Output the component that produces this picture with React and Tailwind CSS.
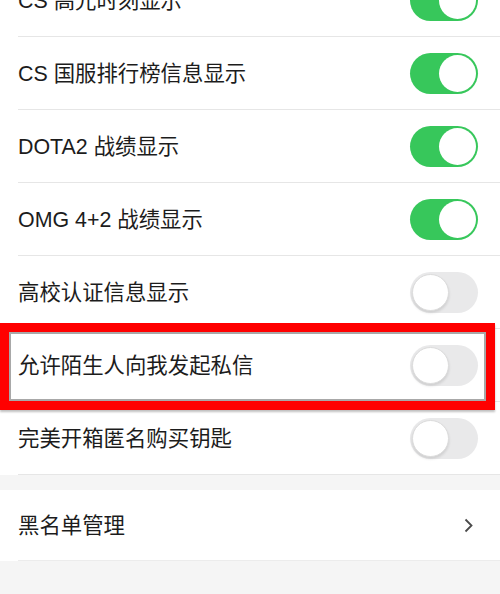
import { useState } from "react";

const rows = [
  { label: "CS 高光时刻显示", on: true },
  { label: "CS 国服排行榜信息显示", on: true },
  { label: "DOTA2 战绩显示", on: true },
  { label: "OMG 4+2 战绩显示", on: true },
  { label: "高校认证信息显示", on: false },
  { label: "允许陌生人向我发起私信", on: false, marked: true },
  { label: "完美开箱匿名购买钥匙", on: false },
];

function Toggle({ on, onClick }) {
  return (
    <button
      onClick={onClick}
      className={
        on
          ? "relative flex h-[41px] w-[68px] shrink-0 items-center justify-end rounded-full bg-[#37c75b] p-[2px]"
          : "relative flex h-[41px] w-[68px] shrink-0 items-center justify-start rounded-full bg-[#e9e9ea] p-[2px]"
      }
    >
      <span
        className={
          on
            ? "block h-[37px] w-[37px] rounded-full bg-white"
            : "block h-[37px] w-[37px] rounded-full border border-[#dcdcdc] bg-white shadow-[0_2px_3px_rgba(0,0,0,0.12)]"
        }
      />
    </button>
  );
}

export default function App() {
  const [settings, setSettings] = useState(rows);

  const flip = (i) => {
    const copy = [...settings];
    copy[i] = { ...copy[i], on: !copy[i].on };
    setSettings(copy);
  };

  return (
    <div
      className="h-[594px] w-[500px] overflow-hidden bg-[#f5f5f5] text-[#1c1c1c]"
      style={{ fontFamily: '"Liberation Sans", "Noto Sans CJK SC", sans-serif' }}
    >
      <div className="-mt-[36px] bg-white pl-[18px]">
        {settings.map((item, i) => (
          <div key={item.label} className="relative">
            <div className="flex h-[73px] items-center justify-between border-b border-[#e6e6e6] pr-[22px]">
              <span className="pt-[3px] text-[21.4px] leading-none">{item.label}</span>
              <Toggle on={item.on} onClick={() => flip(i)} />
            </div>
            {item.marked && (
              <div className="pointer-events-none absolute -left-[18px] right-[5px] top-[-6px] bottom-[-8px] border-[9px] border-[#ff0000] shadow-[0_2px_2px_rgba(0,0,0,0.25)]">
                <div className="h-full w-full border-2 border-[#a8a8a8]" />
              </div>
            )}
          </div>
        ))}
      </div>
      <div className="mt-[15px] bg-white pl-[18px]">
        <div className="flex h-[71px] items-center justify-between border-b border-[#ececec] pr-[27px]">
          <span className="pt-[3px] text-[21.4px] leading-none">黑名单管理</span>
          <svg width="9" height="15" viewBox="0 0 9 15" fill="none">
            <path d="M1.5 1.5 L7.5 7.5 L1.5 13.5" stroke="#4a4a4a" strokeWidth="1.8" />
          </svg>
        </div>
      </div>
    </div>
  );
}
